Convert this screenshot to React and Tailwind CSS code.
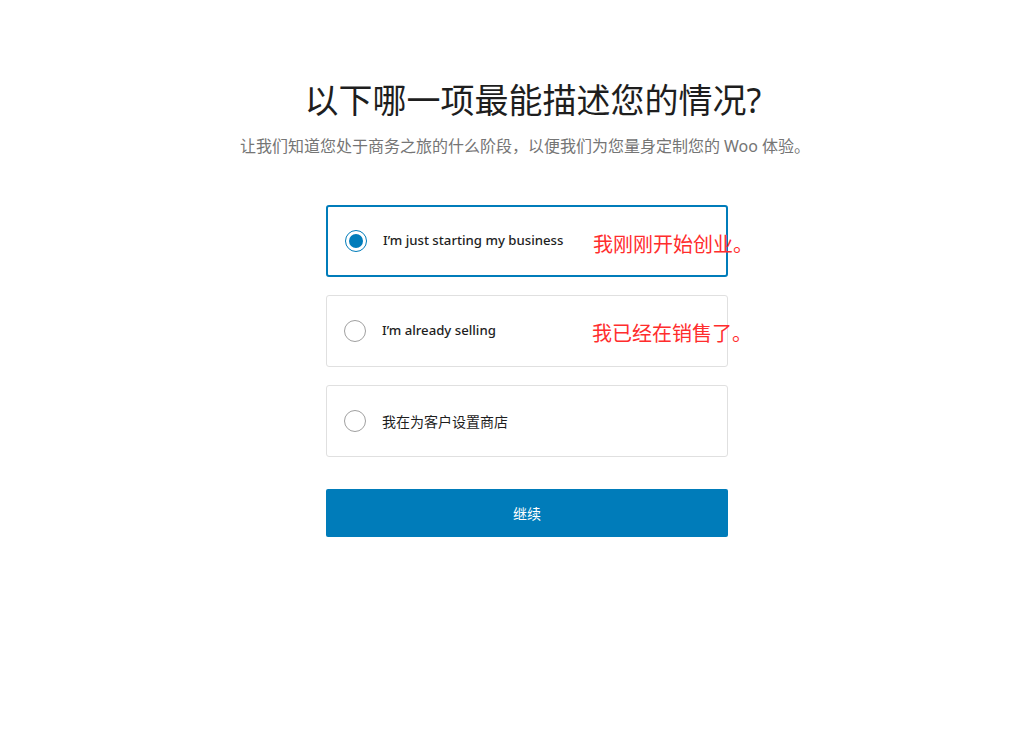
import React, { useState } from "react";

const font = { fontFamily: '"Noto Sans", "Noto Sans CJK SC", sans-serif' };

function Radio({ checked }) {
  return checked ? (
    <span className="flex h-[22px] w-[22px] shrink-0 items-center justify-center rounded-full border-[1.5px] border-[#007cba] bg-white">
      <span className="h-[14px] w-[14px] rounded-full bg-[#007cba]" />
    </span>
  ) : (
    <span className="h-[22px] w-[22px] shrink-0 rounded-full border-[1.5px] border-[#a0a0a0] bg-white" />
  );
}

export default function App() {
  const [sel, setSel] = useState(0);
  const options = [
    { label: "I’m just starting my business", note: "我刚刚开始创业。", en: true },
    { label: "I’m already selling", note: "我已经在销售了。", en: true },
    { label: "我在为客户设置商店", note: null, en: false },
  ];
  return (
    <div className="flex min-h-[737px] w-full flex-col items-center bg-white pl-[30px] pt-[78px]" style={font}>
      <h1 className="pl-[12px] text-[34px] leading-[44px] font-normal text-[#1e1e1e]">以下哪一项最能描述您的情况?</h1>
      <p className="mt-[12px] pr-[4px] text-[16px] leading-[24px] text-[#757575]">
        让我们知道您处于商务之旅的什么阶段，以便我们为您量身定制您的 Woo 体验。
      </p>
      <div className="mt-[47px] flex w-[402px] flex-col gap-[18px]">
        {options.map((o, i) => (
          <div
            key={i}
            onClick={() => setSel(i)}
            className={
              "relative flex h-[72px] cursor-pointer items-center gap-[16px] rounded-[3px] bg-white pl-[17px] " +
              (sel === i ? "border-2 border-[#007cba] pl-[16px]" : "border border-[#e0e0e0]")
            }
          >
            <Radio checked={sel === i} />
            <span className={"text-[#1e1e1e] " + (o.en ? "text-[13.2px] font-medium" : "text-[14px] font-normal")}>{o.label}</span>
            {o.note && (
              <span className="absolute left-[265px] top-[24px] text-[20px] leading-[28px] whitespace-nowrap text-[#ff2d2d]">
                {o.note}
              </span>
            )}
          </div>
        ))}
      </div>
      <button className="mt-[32px] h-[48px] w-[402px] rounded-[2px] bg-[#007cba] text-[14px] text-white">继续</button>
    </div>
  );
}
